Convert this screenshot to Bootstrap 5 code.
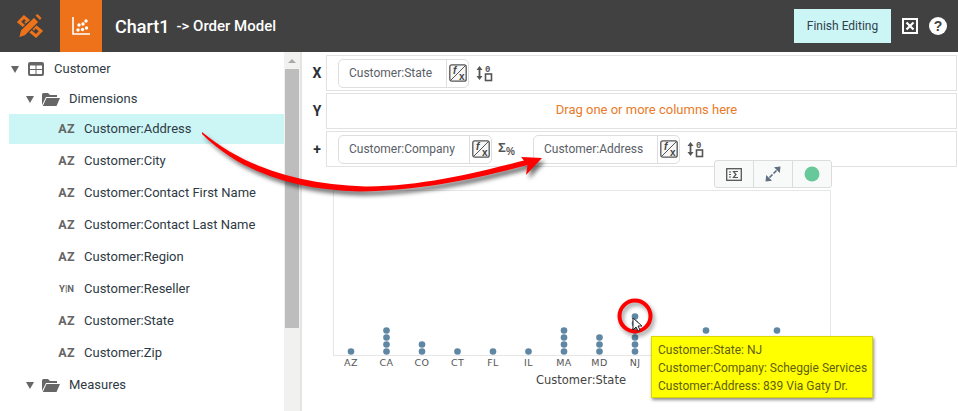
<!DOCTYPE html>
<html lang="en"><head><meta charset="utf-8"><title>Chart1</title>
<link href="https://cdn.jsdelivr.net/npm/bootstrap@5.3.0/dist/css/bootstrap.min.css" rel="stylesheet">
<style>
html,body{height:411px;overflow:hidden;background:#fff}
body{font-family:Roboto,"Liberation Sans",sans-serif;color:#2f3a44;font-size:13px;position:relative}
.topbar{height:52px;background:#414141;color:#fff}
.logo-cell{width:60px;height:52px}
.chart-cell{width:42px;height:52px;background:#ee7219}
.chart-title{font-size:18px;font-weight:500;margin-left:13px}
.chart-sub{font-size:15px;font-weight:500;margin-left:7px}
.finish-btn{width:97px;height:34px;background:#ccf6f6;color:#33414f;font-size:12px;border:0;border-radius:0;padding:0}
.finish-btn:hover{background:#ccf6f6;color:#33414f}
.head-tools{margin-left:11px;margin-right:11px;gap:11px}
.content-area{height:359px}
.tree-pane{width:284px;padding:2px 0 0 9px;overflow:hidden}
.tree-row{height:30px;white-space:nowrap;margin-bottom:2px}
.tree-row.flush{margin-bottom:0}
.tree-row.picked{background:#ccf6f6}
.lvl-1{padding-left:2px}
.lvl-2{padding-left:17px}
.lvl-3{padding-left:49px}
.caret{width:0;height:0;border-left:4.5px solid transparent;border-right:4.5px solid transparent;border-top:7px solid #666;margin-right:8px;flex:none}
.tree-ico{flex:none;margin-right:9px}
.table-ico{flex:none;margin-left:1px;margin-right:10px}
.type-tag{width:17px;margin-right:9px;font-size:12.5px;font-weight:700;color:#666;letter-spacing:.3px;text-align:center;flex:none;line-height:1}
.type-tag.tiny{font-size:9.5px;letter-spacing:0}
.scroll-track{width:16px;background:#f1f1ef;padding:17px 1px 0 1px;position:relative}
.scroll-up{width:0;height:0;border-left:4px solid transparent;border-right:4px solid transparent;border-bottom:4px solid #a9a9a9;position:absolute;top:7px;left:4px}
.scroll-thumb{height:259px;background:#bdbdbd}
.pane-rule{width:2px;background:#e4e4e4}
.work-pane{width:656px;padding-top:3px}
.shelf{height:36px;margin-bottom:2px;padding-right:1px}
.shelf-key{width:24px;padding-left:6px;font-size:14px;font-weight:700;text-align:center;color:#2b3036;flex:none;line-height:1}
.shelf-box{flex:1 1 auto;border:1px solid #e2e2e2;padding-left:11px;height:36px;gap:6px}
.drop-hint{color:#ea7a2a;font-size:13px;padding-left:10px;padding-bottom:2px}
.pill{height:29px;border:1px solid #dedede;border-radius:5px;color:#5a6068;font-size:12px;background:#fff}
.pill-state{width:131px}
.pill-company{width:154px}
.pill-address{width:147px}
.pill-name{padding-left:10px}
.pill-fx{border-left:1px solid #dedede;height:100%;width:22px;flex:none}
.plot-wrap{position:relative;height:242px}
.plot-wrap svg{display:block}
.axis-txt{font-family:"DejaVu Sans",sans-serif;font-size:9.5px;fill:#555;letter-spacing:.4px}
.axis-name{font-family:"DejaVu Sans",sans-serif;font-size:11.500px;fill:#444}
.tool-strip{position:absolute;left:412px;top:-9px;width:118px;height:28px;background:#f8f9f9;border:1px solid #dcdcdc;border-radius:3px}
.tool-strip>div{flex:1 1 0;height:100%;border-right:1px solid #dcdcdc}
.tool-strip>div:last-child{border-right:0}
.hint-box{position:absolute;left:349px;top:167px;width:222px;height:62px;background:#ff0;border:1px solid #d8d800;box-shadow:1px 2px 3px rgba(0,0,0,.45);color:#5f6010;font-size:12px;line-height:18.2px;padding:4px 0 0 6px;white-space:nowrap}
.overlay{position:absolute;left:0;top:0;pointer-events:none}
.arrow-shade{filter:drop-shadow(3px 4px 2px rgba(0,0,0,.55))}
.ring-shade{filter:drop-shadow(2px 3px 2px rgba(0,0,0,.4))}
.fx-f{font-family:"Liberation Sans",sans-serif;font-style:italic;font-weight:700;font-size:10px;fill:#444}
.fx-x{font-family:"Liberation Sans",sans-serif;font-weight:700;font-size:10px;fill:#444}
.sig-a{font-family:"Liberation Sans",sans-serif;font-weight:700;font-size:13px;fill:#555}
.sig-b{font-family:"Liberation Sans",sans-serif;font-weight:700;font-size:10px;fill:#555}
.num{font-family:"Liberation Mono",monospace;font-weight:700;font-size:9px;fill:#555}
.q-mark{font-family:"Liberation Sans",sans-serif;font-weight:700;font-size:14px;fill:#414141}
</style></head>
<body>
<svg width="0" height="0" class="d-block"><defs>
<symbol id="fx" viewBox="0 0 18 18"><rect x=".8" y=".8" width="16.4" height="16.4" rx="2" fill="#f6f6f6" stroke="#555" stroke-width="1.3"/><path d="M1 17 17 1" stroke="#555" stroke-width="1"/><text x="4" y="9.500" class="fx-f">f</text><text x="10" y="15.500" class="fx-x">x</text></symbol>
<symbol id="sorter" viewBox="0 0 18 18"><path d="M4.500 2 7.500 6H5.400v6H7.500L4.500 16 1.500 12H3.600V6H1.500Z" fill="#555"/><text x="10" y="8" class="num">0</text><rect x="10.500" y="10" width="6" height="6.500" fill="none" stroke="#555" stroke-width="1.600"/></symbol>
<symbol id="folder" viewBox="0 0 18 15"><path d="M0 2.500Q0 1 1.500 1H6L8 3H15V5H4L0 13Z" fill="#666"/><path d="M4.500 6H18L14.500 14H.8Z" fill="#666"/></symbol>
</defs></svg>

<div class="topbar d-flex align-items-center">
  <div class="logo-cell d-flex align-items-center justify-content-center">
    <svg width="26" height="26" viewBox="0 0 26 26"><path d="M2 9 7 4 24 18 19 23Z" fill="none" stroke="#ee7219" stroke-width="3"/><path d="M8 10 10 8M12 13.500 14 11.500M16 17 18 15" stroke="#ee7219" stroke-width="2"/><path d="M1.500 25 3.500 17 17 4 22 9 8.500 22.500Z" fill="#ee7219" stroke="#414141" stroke-width="1.200"/><path d="M18.500 2.500 20.500 1 24.500 5 23 7Z" fill="#ee7219"/></svg>
  </div>
  <div class="chart-cell d-flex align-items-center justify-content-center">
    <svg width="20" height="20" viewBox="0 0 20 20"><path d="M2 1V18H19" fill="none" stroke="#fff" stroke-width="1.600"/><g fill="#fff"><circle cx="7" cy="14" r="1.700"/><circle cx="11.500" cy="13.500" r="1.700"/><circle cx="8" cy="9" r="1.700"/><circle cx="12" cy="8" r="1.700"/><circle cx="15.500" cy="12" r="1.700"/><circle cx="15" cy="5" r="1.700"/></g></svg>
  </div>
  <span class="chart-title">Chart1</span><span class="chart-sub">-&gt; Order Model</span>
  <div class="ms-auto d-flex align-items-center">
    <button type="button" class="btn finish-btn">Finish Editing</button>
    <div class="head-tools d-flex align-items-center">
      <svg width="16" height="16" viewBox="0 0 16 16"><rect x="1" y="1" width="14" height="14" fill="none" stroke="#fff" stroke-width="2"/><path d="M4.500 4.500 11.500 11.500M11.500 4.500 4.500 11.500" stroke="#fff" stroke-width="2.200"/></svg>
      <svg width="18" height="18" viewBox="0 0 18 18"><circle cx="9" cy="9" r="9" fill="#fff"/><text x="9" y="14" text-anchor="middle" class="q-mark">?</text></svg>
    </div>
  </div>
</div>

<div class="content-area d-flex">
  <div class="tree-pane">
    <div class="tree-row flush lvl-1 d-flex align-items-center"><span class="caret"></span><svg class="table-ico" width="16" height="14" viewBox="0 0 16 14"><rect width="16" height="14" rx="2" fill="#666"/><rect x="2" y="3.500" width="5.500" height="3.500" fill="#fff"/><rect x="8.500" y="3.500" width="5.500" height="3.500" fill="#fff"/><rect x="2" y="8" width="5.500" height="4" fill="#fff"/><rect x="8.500" y="8" width="5.500" height="4" fill="#fff"/></svg><span>Customer</span></div>
    <div class="tree-row flush lvl-2 d-flex align-items-center"><span class="caret"></span><svg class="tree-ico" width="18" height="15"><use href="#folder"/></svg><span>Dimensions</span></div>
    <div class="tree-row picked lvl-3 d-flex align-items-center"><span class="type-tag">AZ</span><span>Customer:Address</span></div>
    <div class="tree-row lvl-3 d-flex align-items-center"><span class="type-tag">AZ</span><span>Customer:City</span></div>
    <div class="tree-row lvl-3 d-flex align-items-center"><span class="type-tag">AZ</span><span>Customer:Contact First Name</span></div>
    <div class="tree-row lvl-3 d-flex align-items-center"><span class="type-tag">AZ</span><span>Customer:Contact Last Name</span></div>
    <div class="tree-row lvl-3 d-flex align-items-center"><span class="type-tag">AZ</span><span>Customer:Region</span></div>
    <div class="tree-row lvl-3 d-flex align-items-center"><span class="type-tag tiny">Y|N</span><span>Customer:Reseller</span></div>
    <div class="tree-row lvl-3 d-flex align-items-center"><span class="type-tag">AZ</span><span>Customer:State</span></div>
    <div class="tree-row lvl-3 d-flex align-items-center"><span class="type-tag">AZ</span><span>Customer:Zip</span></div>
    <div class="tree-row lvl-2 d-flex align-items-center"><span class="caret"></span><svg class="tree-ico" width="18" height="15"><use href="#folder"/></svg><span>Measures</span></div>
    <div class="tree-row lvl-3 d-flex align-items-center"><span class="type-tag">AZ</span><span>Customer:Sum</span></div>
  </div>
  <div class="scroll-track"><span class="scroll-up"></span><div class="scroll-thumb"></div></div>
  <div class="pane-rule"></div>
  <div class="work-pane">
    <div class="shelf d-flex align-items-center">
      <span class="shelf-key">X</span>
      <div class="shelf-box d-flex align-items-center">
        <div class="pill pill-state d-flex align-items-center"><span class="pill-name flex-grow-1">Customer:State</span><span class="pill-fx d-flex align-items-center justify-content-center"><svg width="18" height="18"><use href="#fx"/></svg></span></div>
        <svg width="18" height="18"><use href="#sorter"/></svg>
      </div>
    </div>
    <div class="shelf d-flex align-items-center">
      <span class="shelf-key">Y</span>
      <div class="shelf-box d-flex align-items-center justify-content-center drop-hint">Drag one or more columns here</div>
    </div>
    <div class="shelf d-flex align-items-center">
      <span class="shelf-key">+</span>
      <div class="shelf-box d-flex align-items-center">
        <div class="pill pill-company d-flex align-items-center"><span class="pill-name flex-grow-1">Customer:Company</span><span class="pill-fx d-flex align-items-center justify-content-center"><svg width="18" height="18"><use href="#fx"/></svg></span></div>
        <svg width="17" height="16" viewBox="0 0 17 16" class="me-2"><text x="0" y="11" class="sig-a">Σ</text><text x="8" y="14" class="sig-b">%</text></svg>
        <div class="pill pill-address d-flex align-items-center ms-1"><span class="pill-name flex-grow-1">Customer:Address</span><span class="pill-fx d-flex align-items-center justify-content-center"><svg width="18" height="18"><use href="#fx"/></svg></span></div>
        <svg width="18" height="18"><use href="#sorter"/></svg>
      </div>
    </div>
    <div class="plot-wrap">
      <svg id="plot" width="656" height="242" viewBox="302 169 656 242"></svg>
      <div class="tool-strip d-flex">
        <div class="d-flex align-items-center justify-content-center"><svg width="16" height="13" viewBox="0 0 16 13"><rect x=".7" y=".7" width="14.600" height="11.600" fill="none" stroke="#555" stroke-width="1.300"/><path d="M3 4H5M3 6.500H5M3 9H5" stroke="#555"/><path d="M12 3.500H7.500L10 6.500 7.500 9.500H12" fill="none" stroke="#555" stroke-width="1.200"/></svg></div>
        <div class="d-flex align-items-center justify-content-center"><svg width="16" height="16" viewBox="0 0 16 16"><path d="M15.500.5 9 1.200 14.800 7ZM.5 15.500 7 14.800 1.200 9Z" fill="#607080"/><path d="M11.500 4.500 8.500 7.500M4.500 11.500 7.500 8.500" stroke="#607080" stroke-width="1.700"/></svg></div>
        <div class="d-flex align-items-center justify-content-center"><svg width="16" height="16" viewBox="0 0 16 16"><circle cx="8" cy="8" r="7.500" fill="#67c99a"/></svg></div>
      </div>
      <div class="hint-box">Customer:State: NJ<br>Customer:Company: Scheggie Services<br>Customer:Address: 839 Via Gaty Dr.</div>
    </div>
  </div>
</div>

<svg class="overlay" width="958" height="411" viewBox="0 0 958 411">
  <path class="arrow-shade" fill="#f00" d="M202 132C245 168 300 184 365 186.500C420 187 480 172 524 160.500L521 157 542 158 526 175 527.500 165C480 178 420 191 360 191.500C295 190 240 172 202 134Z"/>
  <circle class="ring-shade" cx="635" cy="316" r="15.500" fill="none" stroke="#f00" stroke-width="4"/>
  <path d="M633 318V330L636 327 638 331 640 330 638 326 642 326Z" fill="#fff" stroke="#222" stroke-width="1"/>
</svg>

<script>
var cols=[['AZ',1],['CA',4],['CO',2],['CT',1],['FL',1],['IL',1],['MA',4],['MD',3],['NJ',6]];
var s='<rect x="333.500" y="190.500" width="497" height="165" fill="#fff" stroke="#e6e6e6"/>';
cols.forEach(function(c,i){
  var x=351+i*35.5;
  for(var k=0;k<c[1];k++){ s+='<circle cx="'+x+'" cy="'+(351.5-k*7)+'" r="3.300" fill="#5f86a3"/>'; }
  s+='<text class="axis-txt" x="'+x+'" y="366" text-anchor="middle">'+c[0]+'</text>';
});
[706,777].forEach(function(x){ s+='<circle cx="'+x+'" cy="330.500" r="3.300" fill="#5f86a3"/>'; });
s+='<text class="axis-name" x="581" y="384" text-anchor="middle">Customer:State</text>';
document.getElementById('plot').innerHTML=s;
</script>
<script src="https://cdn.jsdelivr.net/npm/bootstrap@5.3.0/dist/js/bootstrap.bundle.min.js"></script>
</body></html>
